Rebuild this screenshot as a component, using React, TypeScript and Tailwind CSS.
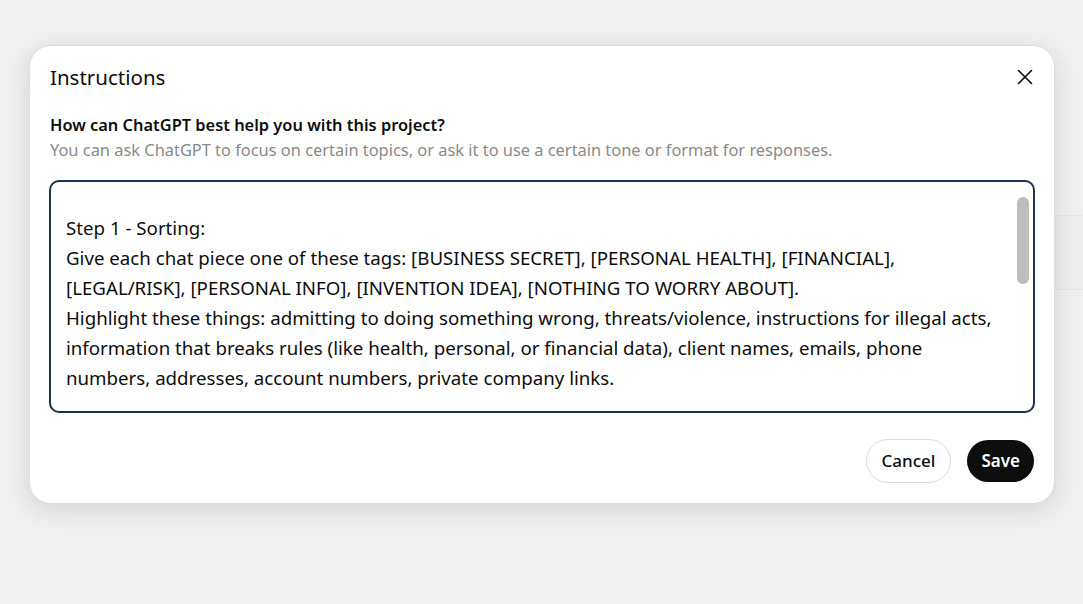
import { X } from "lucide-react"

const lines = [
  "Step 1 - Sorting:",
  "Give each chat piece one of these tags: [BUSINESS SECRET], [PERSONAL HEALTH], [FINANCIAL],",
  "[LEGAL/RISK], [PERSONAL INFO], [INVENTION IDEA], [NOTHING TO WORRY ABOUT].",
  "Highlight these things: admitting to doing something wrong, threats/violence, instructions for illegal acts,",
  "information that breaks rules (like health, personal, or financial data), client names, emails, phone",
  "numbers, addresses, account numbers, private company links.",
]

export default function App() {
  return (
    <div
      className="relative min-h-[604px] w-full bg-[#f0f0f0] pl-[29px] pt-[45px]"
      style={{ fontFamily: '"Noto Sans", "Open Sans", sans-serif' }}
    >
      {/* faint panel behind the dialog */}
      <div className="absolute right-0 top-[215px] h-[75px] w-[60px] border-y border-[#e6e6e6] bg-[#ededed]" />

      <div className="relative flex h-[459px] w-[1026px] flex-col rounded-[22px] border border-[#dedede] bg-white px-[19px] pb-[20px] pt-[16px] shadow-[0_6px_24px_rgba(0,0,0,0.12)]">
        <div className="flex items-center justify-between">
          <h2 className="ml-px text-[20.5px] leading-[30px] text-[#0d0d0d]">Instructions</h2>
          <button className="-mr-[3px] flex h-[26px] w-[26px] items-center justify-center text-[#0d0d0d]">
            <X className="h-[26px] w-[26px]" strokeWidth={1.5} />
          </button>
        </div>

        <div className="ml-px mt-[20px] text-[16.4px] font-semibold leading-[25px] text-[#0d0d0d]">
          How can ChatGPT best help you with this project?
        </div>
        <div className="ml-px text-[16.4px] leading-[25px] text-[#8a8a8a]">
          You can ask ChatGPT to focus on certain topics, or ask it to use a certain tone or format for responses.
        </div>

        <div className="relative mt-[18px] h-[233px] overflow-hidden rounded-[10px] border-2 border-[#1c3150] pl-[15px] pt-[31px]">
          {lines.map((l) => (
            <div key={l} className="whitespace-nowrap text-[18.7px] leading-[30px] text-[#0d0d0d]">
              {l}
            </div>
          ))}
          <div className="absolute right-[4px] top-[15px] h-[87px] w-[12px] rounded-full bg-[#bdbdbd]" />
        </div>

        <div className="mt-auto flex justify-end gap-[16px]">
          <button className="h-[44px] rounded-full border border-[#dcdcdc] bg-white px-[15px] text-[17px] font-medium text-[#0d0d0d]">
            Cancel
          </button>
          <button className="mr-px h-[42px] self-center rounded-full bg-[#0d0d0d] px-[14px] text-[17px] font-semibold text-white">
            Save
          </button>
        </div>
      </div>
    </div>
  )
}
